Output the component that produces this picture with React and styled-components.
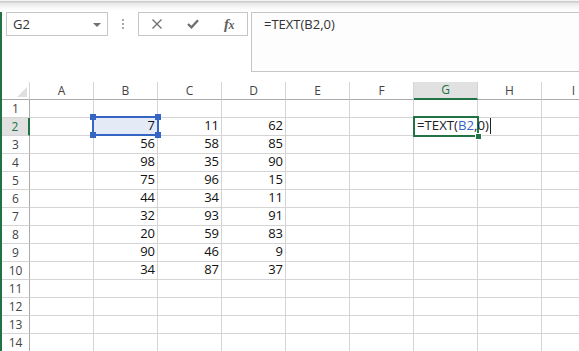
import React from "react";
import styled, { createGlobalStyle } from "styled-components";

const GREEN = "#217346";
const GRID = "#d4d4d4";
const HEADLINE = "#ababab";
const SELBLUE = "#3566c4";

const GlobalStyle = createGlobalStyle`
  html, body { margin: 0; padding: 0; background: #fff; overflow: hidden; }
  body { font-family: "Open Sans", "Noto Sans", sans-serif; }
  * { box-sizing: border-box; }
`;

const Page = styled.div`
  width: 579px;
  height: 351px;
  overflow: hidden;
  display: flex;
  flex-direction: column;
  background: #fff;
`;

const TopStrip = styled.div`
  height: 12px;
  flex-shrink: 0;
  background: linear-gradient(
    #f4f4f4 0px,
    #f4f4f4 1px,
    #cdcdcd 1px,
    #cdcdcd 2px,
    #e6e6e6 3px,
    #f6f6f6 7px,
    #ffffff 11px
  );
`;

const Main = styled.div`
  flex: 1;
  min-height: 0;
  display: flex;
  flex-direction: column;
  border-left: 2px solid ${GREEN};
  overflow: hidden;
`;

const FormulaBar = styled.div`
  height: 70px;
  flex-shrink: 0;
  display: flex;
  align-items: flex-start;
  padding-left: 4px;
`;

const NameBox = styled.div`
  width: 102px;
  height: 24px;
  border: 1px solid #c6c6c6;
  display: flex;
  align-items: center;
  justify-content: space-between;
  padding: 0 6px 0 6px;
  font-size: 13px;
  color: #333;
`;

const Caret = styled.span`
  width: 0;
  height: 0;
  border-left: 4px solid transparent;
  border-right: 4px solid transparent;
  border-top: 4px solid #707070;
  margin-top: 1px;
`;

const Grip = styled.div`
  width: 30px;
  display: flex;
  flex-direction: column;
  align-items: center;
  gap: 2px;
  padding-top: 7px;
`;

const GripDot = styled.span`
  width: 2px;
  height: 2px;
  background: #a8a8a8;
`;

const ToolBox = styled.div`
  width: 110px;
  height: 24px;
  border: 1px solid #c6c6c6;
  display: flex;
  align-items: center;
  padding-left: 10px;
  gap: 20px;
`;

const ToolButton = styled.span`
  width: 16px;
  height: 16px;
  display: flex;
  align-items: center;
  justify-content: center;
  color: #666;
`;

const Fx = styled.span`
  font-family: "Liberation Serif", "DejaVu Serif", serif;
  font-style: italic;
  font-weight: bold;
  font-size: 15px;
  color: #606060;
  line-height: 1;
  letter-spacing: -0.5px;
  & > small {
    font-size: 12px;
  }
`;

const FormulaBox = styled.div`
  flex: 1;
  margin-left: 3px;
  margin-right: -10px;
  height: 60px;
  border: 1px solid #c6c6c6;
  padding: 2px 0 0 12px;
  font-size: 13px;
  line-height: 18px;
  color: #333;
  background: #fdfdfd;
`;

const Sheet = styled.div`
  display: grid;
  grid-template-columns: 28px repeat(9, 64px);
  grid-template-rows: 18px;
  grid-auto-rows: 18px;
  width: 604px;
`;

const Corner = styled.div`
  position: relative;
  border-right: 1px solid ${GRID};
  border-bottom: 1px solid ${HEADLINE};
  &::after {
    content: "";
    position: absolute;
    right: 2px;
    bottom: 2px;
    width: 0;
    height: 0;
    border-left: 10px solid transparent;
    border-bottom: 10px solid #dfdfdf;
  }
`;

const ColHead = styled.div`
  display: flex;
  align-items: center;
  justify-content: center;
  font-size: 12px;
  line-height: 16px;
  color: ${(p) => (p.$active ? GREEN : "#444")};
  background: ${(p) => (p.$active ? "#e1e1e1" : "#fff")};
  border-right: 1px solid ${GRID};
  border-bottom: ${(p) => (p.$active ? `2px solid ${GREEN}` : `1px solid ${HEADLINE}`)};
`;

const RowHead = styled.div`
  display: flex;
  align-items: center;
  justify-content: center;
  font-size: 12px;
  line-height: 16px;
  color: ${(p) => (p.$active ? GREEN : "#444")};
  background: ${(p) => (p.$active ? "#e1e1e1" : "#fff")};
  border-bottom: 1px solid ${GRID};
  border-right: ${(p) => (p.$active ? `2px solid ${GREEN}` : `1px solid ${HEADLINE}`)};
`;

const Cell = styled.div`
  position: relative;
  display: flex;
  justify-content: ${(p) => (p.$left ? "flex-start" : "flex-end")};
  align-items: flex-start;
  padding: 0 ${(p) => (p.$left ? "0" : "2px")} 0 ${(p) => (p.$left ? "3px" : "0")};
  font-size: 13px;
  line-height: 15px;
  color: #111;
  white-space: nowrap;
  border-right: 1px solid ${GRID};
  border-bottom: 1px solid ${GRID};
  background: ${(p) => (p.$refHighlight ? "#e4ebf7" : "transparent")};
  z-index: ${(p) => (p.$editing ? 3 : "auto")};
`;

const RefBox = styled.div`
  position: absolute;
  left: -2px;
  top: -2px;
  right: -2px;
  bottom: -1px;
  border: 2px solid ${SELBLUE};
  pointer-events: none;
  z-index: 2;
`;

const Handle = styled.span`
  position: absolute;
  width: 6px;
  height: 6px;
  background: ${SELBLUE};
  ${(p) => (p.$top ? "top: -4px;" : "bottom: -4px;")}
  ${(p) => (p.$leftSide ? "left: -4px;" : "right: -4px;")}
`;

const ActiveBox = styled.div`
  position: absolute;
  left: -1px;
  top: -2px;
  right: -2px;
  bottom: -2px;
  border: 2px solid ${GREEN};
  pointer-events: none;
`;

const FillHandle = styled.span`
  position: absolute;
  right: -4px;
  bottom: -4px;
  width: 5px;
  height: 5px;
  background: ${GREEN};
  box-shadow: 0 0 0 1px #fff;
`;

const EditText = styled.span`
  position: relative;
  z-index: 1;
  display: flex;
  align-items: flex-start;
  font-size: 13.2px;
  line-height: 16px;
  margin-top: -1px;
  color: #222;
`;

const RefText = styled.span`
  color: ${SELBLUE};
`;

const TextCursor = styled.span`
  width: 1px;
  height: 16px;
  margin-left: 1px;
  margin-top: 1px;
  background: #222;
`;

const COLS = ["A", "B", "C", "D", "E", "F", "G", "H", "I"];
const DATA = {
  2: [7, 11, 62],
  3: [56, 58, 85],
  4: [98, 35, 90],
  5: [75, 96, 15],
  6: [44, 34, 11],
  7: [32, 93, 91],
  8: [20, 59, 83],
  9: [90, 46, 9],
  10: [34, 87, 37],
};

function XIcon() {
  return (
    <svg width="12" height="10" viewBox="0 0 12 10">
      <path d="M1.5 0.5 L10.5 9.5 M10.5 0.5 L1.5 9.5" stroke="#6e6e6e" strokeWidth="1.3" fill="none" />
    </svg>
  );
}

function CheckIcon() {
  return (
    <svg width="12" height="10" viewBox="0 0 12 10">
      <path d="M1 5 L4.5 8.3 L11 1.3" stroke="#6e6e6e" strokeWidth="2.3" fill="none" />
    </svg>
  );
}

function renderCell(row, colIdx) {
  const key = `${COLS[colIdx]}${row}`;
  if (key === "B2") {
    return (
      <Cell key={key} $refHighlight>
        7
        <RefBox>
          <Handle $top $leftSide />
          <Handle $top />
          <Handle $leftSide />
          <Handle />
        </RefBox>
      </Cell>
    );
  }
  if (key === "G2") {
    return (
      <Cell key={key} $left $editing>
        <ActiveBox>
          <FillHandle />
        </ActiveBox>
        <EditText>
          =TEXT(<RefText>B2</RefText>,0)
          <TextCursor />
        </EditText>
      </Cell>
    );
  }
  const vals = DATA[row];
  const v = vals && colIdx >= 1 && colIdx <= 3 ? vals[colIdx - 1] : "";
  return <Cell key={key}>{v}</Cell>;
}

export default function App() {
  const rows = Array.from({ length: 14 }, (_, i) => i + 1);
  return (
    <Page>
      <GlobalStyle />
      <TopStrip />
      <Main>
        <FormulaBar>
          <NameBox>
            <span>G2</span>
            <Caret />
          </NameBox>
          <Grip>
            <GripDot />
            <GripDot />
            <GripDot />
          </Grip>
          <ToolBox>
            <ToolButton>
              <XIcon />
            </ToolButton>
            <ToolButton>
              <CheckIcon />
            </ToolButton>
            <ToolButton>
              <Fx>
                f<small>x</small>
              </Fx>
            </ToolButton>
          </ToolBox>
          <FormulaBox>=TEXT(B2,0)</FormulaBox>
        </FormulaBar>
        <Sheet>
          <Corner />
          {COLS.map((c) => (
            <ColHead key={c} $active={c === "G"}>
              {c}
            </ColHead>
          ))}
          {rows.map((r) => (
            <React.Fragment key={r}>
              <RowHead $active={r === 2}>{r}</RowHead>
              {COLS.map((_, ci) => renderCell(r, ci))}
            </React.Fragment>
          ))}
        </Sheet>
      </Main>
    </Page>
  );
}
